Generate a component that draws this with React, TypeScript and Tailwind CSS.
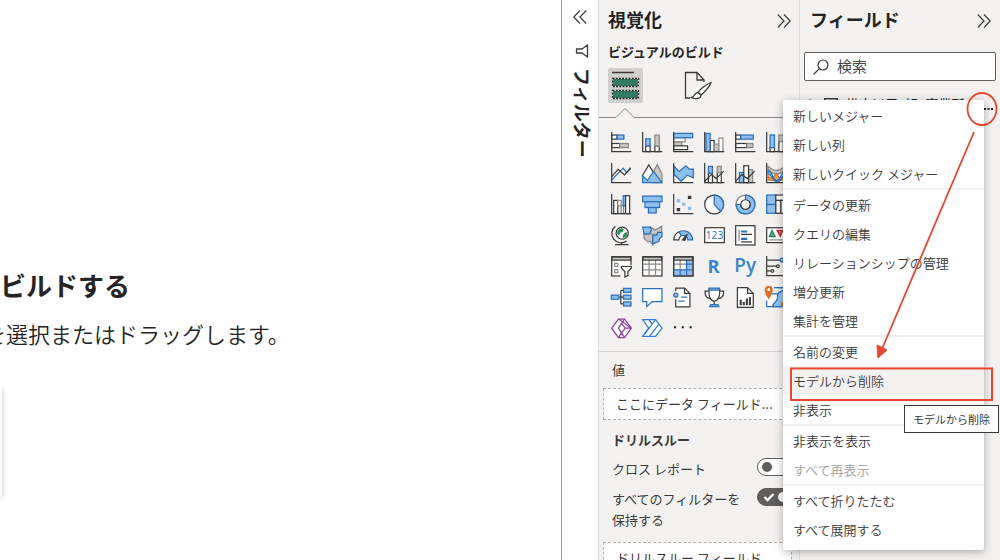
import { ReactNode, useState } from 'react'

const DARK = '#3b3a39'
const BLUE = '#2a6fba'
const SKY = '#8fbfec'
const GRAY = '#c8c6c4'
const MID = '#8a8886'

type BarProps = { x: number; y: number; w: number; h: number; kind?: 'blue' | 'gray' | 'plain' | 'light' }

const kinds = {
  blue: { fill: SKY, stroke: BLUE },
  gray: { fill: GRAY, stroke: MID },
  plain: { fill: '#fff', stroke: DARK },
  light: { fill: '#fff', stroke: MID },
}

function Bar({ x, y, w, h, kind = 'plain' }: BarProps) {
  return <rect x={x} y={y} width={w} height={h} {...kinds[kind]} />
}

const Axis = () => <path d="M2 0V58H60" stroke={DARK} fill="none" />

const visuals: { name: string; art: ReactNode }[] = [
  {
    name: '積み上げ横棒グラフ',
    art: <><Bar x={2} y={9} w={16} h={12} /><Bar x={18} y={9} w={20} h={12} kind="blue" /><Bar x={2} y={34} w={24} h={12} /><Bar x={26} y={34} w={25} h={12} kind="gray" /><Axis /></>,
  },
  {
    name: '積み上げ縦棒グラフ',
    art: <><Bar x={11} y={41} w={13} h={17} /><Bar x={11} y={20} w={13} h={21} kind="blue" /><Bar x={38} y={41} w={13} h={17} /><Bar x={38} y={9} w={13} h={32} kind="gray" /><Axis /></>,
  },
  {
    name: '集合横棒グラフ',
    art: <><Bar x={2} y={29} w={24} h={12} kind="gray" /><Bar x={2} y={17} w={34} h={12} kind="light" /><Bar x={2} y={41} w={41} h={11} /><Bar x={2} y={4} w={56} h={13} kind="blue" /><Axis /></>,
  },
  {
    name: '集合縦棒グラフ',
    art: <><Bar x={18} y={25} w={12} h={33} /><Bar x={30} y={36} w={14} h={22} kind="gray" /><Bar x={44} y={18} w={12} h={40} kind="light" /><Bar x={6} y={4} w={12} h={54} kind="blue" /><Axis /></>,
  },
  {
    name: '100% 積み上げ横棒グラフ',
    art: <><Bar x={2} y={9} w={15} h={12} /><Bar x={17} y={9} w={37} h={12} kind="blue" /><Bar x={2} y={34} w={33} h={12} /><Bar x={35} y={34} w={18} h={12} kind="gray" /><Axis /></>,
  },
  {
    name: '100% 積み上げ縦棒グラフ',
    art: <><Bar x={12} y={46} w={13} h={12} /><Bar x={12} y={9} w={13} h={37} kind="blue" /><Bar x={38} y={28} w={13} h={30} /><Bar x={38} y={9} w={13} h={19} kind="gray" /><Axis /></>,
  },
  {
    name: '折れ線グラフ',
    art: <><path d="M2 50L36 15L46 28L58 18" stroke={BLUE} fill="none" /><path d="M2 40L21 19L40 35L58 14" stroke={DARK} fill="none" /><Axis /></>,
  },
  {
    name: '面グラフ',
    art: <><path d="M32 30L45 4L59 32V58H32Z" fill={GRAY} stroke={MID} /><path d="M2 36L20 6L44 44L30 57H2Z" fill="#fff" stroke={DARK} /><path d="M2 38L16 52L34 25L59 58H2Z" fill={SKY} stroke={BLUE} /></>,
  },
  {
    name: '積み上げ面グラフ',
    art: <><path d="M2 34L22 54L42 36L60 44V58H2Z" fill="#fff" stroke="none" /><path d="M3 9L18 25L38 8L48 18H60V44L42 36L24 54L3 34Z" fill={SKY} stroke={BLUE} /><Axis /></>,
  },
  {
    name: '折れ線および積み上げ縦棒グラフ',
    art: <><Bar x={13} y={30} w={12} h={28} /><Bar x={13} y={10} w={12} h={20} kind="blue" /><Bar x={39} y={28} w={12} h={30} /><Bar x={39} y={10} w={12} h={18} kind="gray" /><path d="M2 54L22 34L36 46L58 24" stroke={DARK} fill="none" /><Axis /></>,
  },
  {
    name: '折れ線および集合縦棒グラフ',
    art: <><Bar x={13} y={28} w={12} h={30} kind="blue" /><Bar x={40} y={20} w={12} h={38} kind="gray" /><Bar x={26} y={8} w={14} h={50} /><path d="M2 54L20 34L36 46L58 24" stroke={DARK} fill="none" /><Axis /></>,
  },
  {
    name: 'リボングラフ',
    art: <><path d="M6 10Q30 32 54 12V22Q30 44 6 20Z" fill={GRAY} stroke={MID} /><path d="M6 38Q16 54 30 32Q44 54 54 38V50Q30 54 6 50Z" fill="#f0a35e" stroke="#d8722c" /><path d="M6 22C20 26 20 52 32 52S44 26 60 22V32C48 34 44 58 32 56S18 34 6 32Z" fill={SKY} stroke={BLUE} /><Axis /></>,
  },
  {
    name: 'ウォーターフォール図',
    art: <><Bar x={8} y={19} w={12} h={39} /><Bar x={20} y={19} w={10} h={16} kind="light" /><Bar x={30} y={34} w={7} h={24} kind="light" /><Bar x={36} y={5} w={7} h={30} kind="blue" /><Bar x={43} y={5} w={12} h={53} /><Axis /></>,
  },
  {
    name: 'じょうごグラフ',
    art: <><Bar x={2} y={6} w={57} h={17} kind="blue" /><Bar x={9} y={23} w={43} h={17} kind="blue" /><Bar x={19} y={40} w={23} h={16} kind="blue" /></>,
  },
  {
    name: '散布図',
    art: <><g stroke="none" fill={DARK}><path d="M44 5h10v10h-10zM11 41h10v10h-10z" /><path d="M11 15h10v10h-10zM27 25h10v10h-10zM44 38h10v10h-10z" fill={SKY} /></g><Axis /></>,
  },
  {
    name: '円グラフ',
    art: <><circle cx="30" cy="31" r="28" fill="#fff" stroke={DARK} /><path d="M30 3A28 28 0 0 1 49 51L30 31Z" fill={SKY} stroke={BLUE} /></>,
  },
  {
    name: 'ドーナツ グラフ',
    art: <><circle cx="31" cy="31" r="28" fill="#fff" stroke={MID} /><path d="M31 3A28 28 0 1 1 3 31H17A14 14 0 1 0 31 17Z" fill={SKY} stroke={BLUE} /><circle cx="31" cy="31" r="14" fill="#f3f2f1" stroke={DARK} /></>,
  },
  {
    name: 'ツリーマップ',
    art: <><Bar x={2} y={3} w={27} h={28} kind="blue" /><Bar x={2} y={31} w={27} h={26} kind="blue" /><Bar x={29} y={3} w={30} h={16} /><Bar x={29} y={19} w={15} h={38} /><Bar x={44} y={19} w={15} h={38} /></>,
  },
  {
    name: 'マップ',
    art: <><circle cx="33" cy="24" r="18" fill="#fff" stroke={DARK} /><path d="M19 17L30 9L38 12L35 20L28 23L24 30L18 26ZM39 24L49 20L46 33L36 39L34 32Z" fill="#2f8f5b" stroke="none" /><path d="M13 4A26 26 0 0 0 46 47M31 50V57M12 58H52" fill="none" stroke={DARK} /></>,
  },
  {
    name: '塗り分け地図',
    art: <><path d="M24 6L40 14L58 4V22L34 32L14 28Z" fill={GRAY} stroke={MID} /><path d="M6 26H32V58L24 48L18 50L6 40Z" fill={GRAY} stroke={MID} /><path d="M2 6H24L28 14L22 26H6Z" fill={SKY} stroke={BLUE} /><path d="M32 30H44L46 22H59V34L52 40L50 48L32 56Z" fill={SKY} stroke={BLUE} /></>,
  },
  {
    name: 'ゲージ',
    art: <><path d="M2 44A28 29 0 0 1 18 20L25 31A15 16 0 0 0 17 44Z" fill="#fff" stroke={DARK} /><path d="M18 20A28 29 0 0 1 58 44H44A15 16 0 0 0 25 31Z" fill={SKY} stroke={BLUE} /><path d="M28 44L42 27L35 45Z" fill={DARK} stroke={DARK} /></>,
  },
  {
    name: 'カード',
    art: <><Bar x={2} y={8} w={58} h={44} /><text x="31" y="41" textAnchor="middle" fontSize="30" fontFamily="Open Sans, sans-serif" fill={BLUE} stroke="none">123</text></>,
  },
  {
    name: '複数の行カード',
    art: <><Bar x={2} y={2} w={57} h={57} /><path d="M12 14V48" stroke={MID} /><path d="M18 19H36M18 41H36" stroke={BLUE} strokeWidth="6" /><path d="M18 28H50M18 50H50" stroke={DARK} /></>,
  },
  {
    name: 'KPI',
    art: <><Bar x={2} y={8} w={58} h={44} /><path d="M10 34L18 16L27 34Z" fill="#58a878" stroke="#2f7d50" /><path d="M33 16H50L42 34Z" fill="#e05a5a" stroke="#c4262e" /><path d="M10 44H50" stroke={MID} /></>,
  },
  {
    name: 'スライサー',
    art: <><Bar x={2} y={2} w={57} h={57} /><path d="M3 3H58V12H3Z" fill={GRAY} stroke={DARK} /><path d="M11 22h9v9h-9zM11 40h9v9h-9z" fill="#fff" stroke={MID} /><path d="M28 27H64V62H28Z" fill="#f3f2f1" stroke="none" /><path d="M31 31H60V36L50 46V58L41 62V46L31 36Z" fill="#fff" stroke={DARK} /></>,
  },
  {
    name: 'テーブル',
    art: <><Bar x={2} y={2} w={57} h={57} /><path d="M3 24H58M3 41H58M21 12V58M40 12V58" stroke={MID} /><path d="M3 3H58V12H3Z" fill={GRAY} stroke={DARK} /></>,
  },
  {
    name: 'マトリックス',
    art: <><Bar x={2} y={2} w={57} h={57} /><path d="M40 12H58V58H3V41H40Z" fill={SKY} stroke="none" /><path d="M3 24H40M21 12V41" stroke={MID} /><path d="M40 24H58M3 41H58M40 12V58M21 41V58" stroke={BLUE} /><path d="M3 3H58V12H3Z" fill={GRAY} stroke={DARK} /><path d="M2 2V59H59V2" fill="none" stroke={DARK} /></>,
  },
  {
    name: 'R スクリプト ビジュアル',
    art: <text x="28" y="49" textAnchor="middle" fontSize="54" fontWeight="700" fontFamily="Open Sans, sans-serif" fill="#3d84cc" stroke="none">R</text>,
  },
  {
    name: 'Python ビジュアル',
    art: <text x="30" y="46" textAnchor="middle" fontSize="56" fontWeight="600" fontFamily="Open Sans, sans-serif" fill="#3d84cc" stroke="none">Py</text>,
  },
  {
    name: '主要なインフルエンサー',
    art: <><path d="M2 0V58H60M2 12H42M2 30H30M2 44H14" stroke={DARK} fill="none" /><circle cx="48" cy="12" r="6" fill={SKY} stroke={BLUE} /><circle cx="35" cy="30" r="4" fill="#fff" stroke={DARK} /><circle cx="19" cy="44" r="4" fill="#fff" stroke={DARK} /></>,
  },
  {
    name: '分解ツリー',
    art: <><path d="M22 30H36M29 10V50M29 10H36M29 50H36" stroke={DARK} fill="none" /><Bar x={1} y={24} w={22} h={12} kind="blue" /><Bar x={37} y={4} w={22} h={12} kind="blue" /><Bar x={37} y={24} w={22} h={12} kind="blue" /><Bar x={37} y={44} w={22} h={12} kind="blue" /></>,
  },
  {
    name: 'Q&A',
    art: <path d="M2 5H59V43H30L14 58V43H2Z" fill="#fff" stroke={BLUE} />,
  },
  {
    name: 'スマート説明',
    art: <><path d="M8 12V3H34L50 19V59H8V36" fill="#fff" stroke={DARK} /><path d="M34 3V19H50" fill="none" stroke={DARK} /><path d="M24 30H42M16 42H34" stroke={BLUE} /><circle cx="8" cy="24" r="6" fill={SKY} stroke={BLUE} /></>,
  },
  {
    name: 'メトリック',
    art: <><path d="M16 12H3C2 28 10 34 19 34M44 12H58C59 28 51 34 42 34" fill="#fff" stroke={DARK} /><path d="M15 5H46C48 26 42 40 30 42C19 40 13 26 15 5ZM30 42V52" fill="#fff" stroke={DARK} /><path d="M15 3H46V9H15ZM17 58L20 52H41L44 58Z" fill={SKY} stroke={BLUE} /></>,
  },
  {
    name: 'ページ分割されたレポート',
    art: <><path d="M7 2H37L54 19V60H7Z" fill="#fff" stroke={DARK} /><path d="M37 2V19H54" fill="none" stroke={DARK} /><path d="M14 38h6v16h-6zM23 44h6v10h-6zM32 34h6v20h-6zM41 30h6v24h-6z" fill={DARK} stroke="none" /></>,
  },
  {
    name: 'ArcGIS Maps',
    art: <><path d="M4 20H60V58H2V40" fill="#fff" stroke={BLUE} /><path d="M24 2H60V58H20C22 40 36 46 34 30S42 16 54 8" fill={SKY} stroke={BLUE} /><path d="M8 34C0 20-2 14-2 8A10 10 0 0 1 18 8C18 14 14 24 8 34Z" fill="#d8722c" stroke="#d8722c" /><circle cx="8" cy="8" r="4" fill="#fff" stroke="none" /><circle cx="52" cy="50" r="8" fill="#d8722c" stroke="none" /></>,
  },
  {
    name: 'Power Apps',
    art: <><path d="M22 3H40L60 30L40 58H22L2 30Z" fill="#fff" stroke="#8b3fa0" /><path d="M22 3L60 30M40 3L22 30L40 58M22 30L31 16L42 30L31 44ZM42 30H60M31 44L22 58" fill="none" stroke="#8b3fa0" /></>,
  },
  {
    name: 'Power Automate',
    art: <><path d="M2 5H40L59 30L40 54H2L20 30Z" fill="#fff" stroke="#2f7cd6" /><path d="M20 5L30 18L8 47M40 5L10 44M50 18L22 54" fill="none" stroke="#2f7cd6" /></>,
  },
  {
    name: 'その他のビジュアル',
    art: <path d="M3 24h6v6h-6zM26 24h6v6h-6zM49 24h6v6h-6z" fill="#252423" stroke="none" />,
  },
]

const menuGroups = [
  ['新しいメジャー', '新しい列', '新しいクイック メジャー'],
  ['データの更新', 'クエリの編集', 'リレーションシップの管理', '増分更新', '集計を管理'],
  ['名前の変更', 'モデルから削除', '非表示'],
  ['非表示を表示', 'すべて再表示'],
  ['すべて折りたたむ', 'すべて展開する'],
]

function Chevrons({ left = false }: { left?: boolean }) {
  return (
    <svg viewBox="0 0 14 14" className="size-3.5" fill="none" stroke={DARK} strokeWidth="1.2">
      <path d={left ? 'M7 .5L.8 7L7 13.5M13.2 .5L7 7L13.2 13.5' : 'M.8 .5L7 7L.8 13.5M7 .5L13.2 7L7 13.5'} />
    </svg>
  )
}

function Canvas() {
  return (
    <main className="flex-1 min-w-0 overflow-hidden border-r border-[#a19f9d] bg-white pt-[265px] whitespace-nowrap text-[#252423]">
      <h1 className="text-[26px] leading-10 font-bold">ビルドする</h1>
      <p className="mt-2 -ml-4 text-[22px] leading-10 font-[350]">を選択またはドラッグします。</p>
      <div className="mt-[34px] h-[110px] w-0.5 rounded-r-sm bg-white shadow-[0_1px_5px_rgba(0,0,0,0.35)]" />
    </main>
  )
}

function FilterPane() {
  return (
    <aside className="flex w-9 shrink-0 flex-col items-center bg-white pt-2.5">
      <button aria-label="展開"><Chevrons left /></button>
      <svg viewBox="0 0 14 14" className="mt-5 ml-1 size-3.5" fill="none" stroke={DARK} strokeWidth="1.3">
        <path d="M12.5 1V13L7 9H1.5V5H7Z" strokeLinejoin="round" />
      </svg>
      <h2 className="mt-2.5 ml-1.5 text-[18px] leading-6 font-bold text-[#252423] [text-orientation:sideways] [writing-mode:vertical-rl]">フィルター</h2>
    </aside>
  )
}

function Toggle({ label, on }: { label: string; on: boolean }) {
  const [checked, setChecked] = useState(on)
  return (
    <label className="flex items-start justify-between leading-[21px]">
      <span className="w-[136px]">{label}</span>
      <span className="relative">
        <input
          type="checkbox"
          checked={checked}
          onChange={(e) => setChecked(e.target.checked)}
          className="block h-[18px] w-[35px] appearance-none rounded-full border border-[#605e5c] bg-white px-1 py-[3px] before:block before:size-2.5 before:rounded-full before:bg-[#605e5c] checked:bg-[#605e5c] checked:before:ml-4 checked:before:bg-white"
        />
        {checked && (
          <svg viewBox="0 0 12 10" className="absolute top-1 left-1.5 h-2.5 w-3" fill="none" stroke="#fff" strokeWidth="2.4">
            <path d="M1.5 5L4.5 8L10.5 2" />
          </svg>
        )}
      </span>
    </label>
  )
}

function VisualizationPane() {
  return (
    <aside className="flex w-[202px] shrink-0 flex-col overflow-hidden border-x border-[#e1dfdd] bg-[#f3f2f1] text-[13px] text-[#3b3a39]">
      <div className="flex items-start justify-between pt-[7px] pr-2 pl-[9px]">
        <h2 className="text-[18px] leading-6 font-bold text-[#252423]">視覚化</h2>
        <button aria-label="折りたたむ" className="mt-[7px]"><Chevrons /></button>
      </div>
      <h3 className="mt-[11px] pl-[9px] leading-5 font-bold text-[#252423]">ビジュアルのビルド</h3>

      <div className="mt-1.5 flex gap-9 pl-[9px]">
        <button aria-label="ビジュアルのビルド" className="size-[35px] rounded-xs bg-[#d2d0ce]">
          <svg viewBox="0 0 35 35" className="size-[35px]" fill="none">
            <path d="M4 4.5H26" stroke={DARK} strokeWidth="1.5" />
            <path d="M4.5 10.5H30.5V18.5H4.5ZM4.5 22.5H30.5V30.5H4.5Z" fill="#317a63" stroke="#e8f3ee" strokeWidth="1.2" />
            <path d="M4.5 10.5H30.5V18.5H4.5ZM4.5 22.5H30.5V30.5H4.5Z" stroke="#252423" strokeWidth="1.4" strokeDasharray="2 1.2" />
          </svg>
        </button>
        <button aria-label="ビジュアルの書式設定" className="size-[35px]">
          <svg viewBox="0 0 35 35" className="size-[35px]" fill="none" stroke={DARK} strokeWidth="1.3">
            <path d="M11 30H6.5V4.5H18L25 12V14M18 4.5V12H25" />
            <path d="M32 14.5C28 16 21 21 19 24.5L22 27C26 24 31 18 32 14.5Z" fill="#fff" />
            <path d="M19 24.5C15 24.5 16 29 12.5 29.5C16 31.5 22 31 22 27Z" fill="#fff" />
          </svg>
        </button>
      </div>
      <svg viewBox="0 0 200 12" className="mt-1 h-3 w-[200px] shrink-0" fill="none" stroke="#8a8886">
        <path d="M0 10.5H17L26 1.5L35 10.5H200" />
      </svg>

      <div className="mt-2 ml-[7px] grid w-[186px] shrink-0 grid-cols-6">
        {visuals.map((v) => (
          <button key={v.name} title={v.name} className="grid size-[31px] place-items-center">
            <svg viewBox="0 0 62 62" className="size-[21px]" strokeWidth="3.6" overflow="visible">
              {v.art}
            </svg>
          </button>
        ))}
      </div>

      <section className="mt-[7px] border-t border-[#d2d0ce] pt-2 leading-5">
        <h3 className="pl-[13px]">値</h3>
        <div className="mt-2 ml-1 mr-[7px] border border-dashed border-[#b3b0ad] bg-white py-[5px] pl-3">ここにデータ フィールド...</div>
        <h3 className="mt-2.5 pl-[13px] font-bold">ドリルスルー</h3>
        <div className="mt-2 flex flex-col gap-[9px] pr-[7px] pl-[13px]">
          <Toggle label="クロス レポート" on={false} />
          <Toggle label="すべてのフィルターを保持する" on />
        </div>
        <div className="mt-3 ml-1 mr-[7px] border border-dashed border-[#b3b0ad] bg-white py-[5px] pl-3">ドリルスルー フィールド</div>
      </section>
    </aside>
  )
}

function FieldsPane() {
  return (
    <aside className="w-[200px] shrink-0 overflow-hidden bg-[#f3f2f1] px-1 pt-[7px] text-[#252423]">
      <div className="flex items-start justify-between pr-[5px] pl-1.5">
        <h2 className="text-[18px] leading-6 font-bold">フィールド</h2>
        <button aria-label="折りたたむ" className="mt-[7px]"><Chevrons /></button>
      </div>
      <label className="mt-[21px] flex h-[29px] items-center gap-2 rounded-xs border border-[#605e5c] bg-white pl-2">
        <svg viewBox="0 0 16 16" className="size-4 shrink-0" fill="none" stroke={DARK} strokeWidth="1.2">
          <circle cx="10" cy="6" r="5" />
          <path d="M6.4 9.6L.5 15.5" />
        </svg>
        <input type="search" aria-label="検索" placeholder="検索" className="w-full min-w-0 text-[15px] outline-none placeholder:text-[#484644]" />
      </label>
      <div className="mt-[13px] flex items-center gap-2 pr-[3px] pl-1 text-[13px] leading-5 whitespace-nowrap">
        <svg viewBox="0 0 8 12" className="h-3 w-2" fill="none" stroke={DARK}><path d="M1.5 1L6.5 6L1.5 11" /></svg>
        <svg viewBox="0 0 14 12" className="h-3 w-3.5" fill="#fff" stroke={DARK} strokeWidth="1.5"><path d="M.75 .75H13.25V11.25H.75Z" /></svg>
        <span className="flex-1">推定以用_組_事業所_</span>
        <button aria-label="その他のオプション" className="pt-2.5">
          <svg viewBox="0 0 9 2" className="h-0.5 w-[9px]" fill="#252423"><path d="M0 0h2v2h-2zM3.5 0h2v2h-2zM7 0h2v2h-2z" /></svg>
        </button>
      </div>
    </aside>
  )
}

function ContextMenu() {
  return (
    <ul role="menu" className="absolute top-[100px] right-4 w-[201px] rounded-xs bg-white pt-px pb-1.5 text-[13px] leading-[29px] font-[350] text-[#3b3a39] shadow-[0_2px_8px_rgba(0,0,0,0.3)]">
      {menuGroups.map((group, i) => (
        <li key={i} role="none" className={i > 0 ? 'border-t-2 border-[#f0efee]' : ''}>
          {group.map((item) => (
            <button
              key={item}
              role="menuitem"
              disabled={item === 'すべて再表示'}
              className={`block w-full pl-2.5 text-left disabled:text-[#a19f9d] ${item === 'モデルから削除' ? 'bg-[#f3f2f1]' : ''}`}
            >
              {item}
            </button>
          ))}
        </li>
      ))}
    </ul>
  )
}

export default function App() {
  return (
    <div
      lang="ja"
      className="relative flex h-screen w-full overflow-hidden bg-white font-['Noto_Sans_CJK_JP',sans-serif]"
    >
      <Canvas />
      <FilterPane />
      <VisualizationPane />
      <FieldsPane />
      <ContextMenu />

      {/* Red markup: circle, arrow and frame */}
      <svg viewBox="0 0 220 320" className="pointer-events-none absolute top-[90px] right-0 h-80 w-[220px]" fill="none" stroke="#e8472e">
        <ellipse cx="202" cy="19" rx="14.5" ry="16" strokeWidth="1.8" />
        <path d="M194 42L102 259" strokeWidth="1.8" />
        <path d="M98 268L97 255L107 260Z" fill="#e8472e" strokeWidth="1" />
        <path d="M11 278.5H212V310H11Z" strokeWidth="2" />
      </svg>
      <div role="tooltip" className="absolute top-[405px] right-px border border-[#3b3a39] bg-white px-2 text-[11px] leading-[26px] text-[#3b3a39]">
        モデルから削除
      </div>
    </div>
  )
}
